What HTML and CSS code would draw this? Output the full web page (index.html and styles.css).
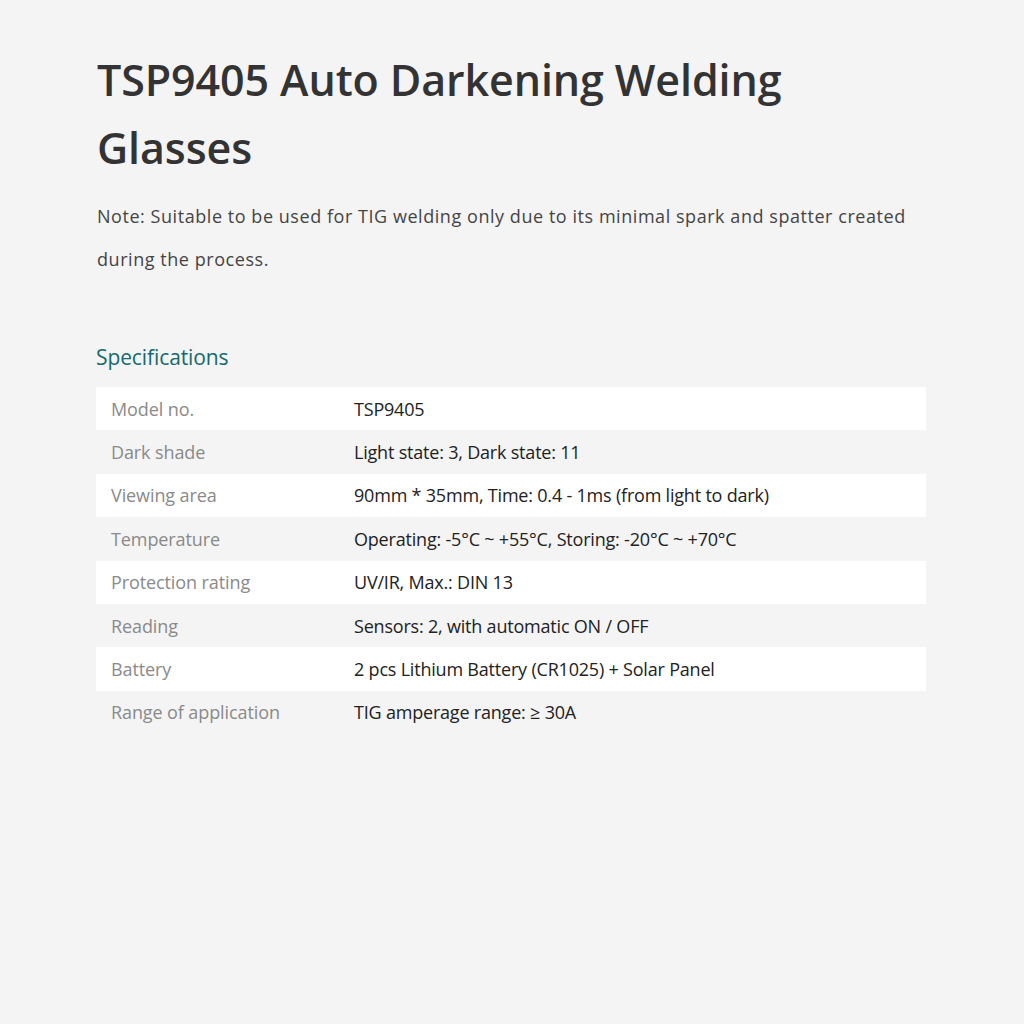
FILE: index.html
```html
<!DOCTYPE html>
<html>
<head>
<meta charset="utf-8">
<link rel="stylesheet" href="styles.css">
</head>
<body>
<main class="page">
  <h1 class="title">TSP9405 Auto Darkening Welding Glasses</h1>
  <p class="note">Note: Suitable to be used for TIG welding only due to its minimal spark and spatter created during the process.</p>
  <h2 class="spec-heading">Specifications</h2>
  <table class="spec-table">
    <tr><td class="label">Model no.</td><td class="value">TSP9405</td></tr>
    <tr><td class="label">Dark shade</td><td class="value">Light state: 3, Dark state: 11</td></tr>
    <tr><td class="label">Viewing area</td><td class="value">90mm * 35mm, Time: 0.4 - 1ms (from light to dark)</td></tr>
    <tr><td class="label">Temperature</td><td class="value">Operating: -5°C ~ +55°C, Storing: -20°C ~ +70°C</td></tr>
    <tr><td class="label">Protection rating</td><td class="value">UV/IR, Max.: DIN 13</td></tr>
    <tr><td class="label">Reading</td><td class="value">Sensors: 2, with automatic ON / OFF</td></tr>
    <tr><td class="label">Battery</td><td class="value">2 pcs Lithium Battery (CR1025) + Solar Panel</td></tr>
    <tr><td class="label">Range of application</td><td class="value">TIG amperage range: ≥ 30A</td></tr>
  </table>
</main>
</body>
</html>
```
FILE: styles.css
```css
html, body {
  margin: 0;
  padding: 0;
  background: #f4f4f4;
}
body {
  font-family: "Open Sans", "Liberation Sans", sans-serif;
  color: #333;
}
.page {
  padding: 46px 98px 0 96px;
}
.title {
  margin: 0;
  font-size: 43px;
  font-weight: 600;
  line-height: 68px;
  letter-spacing: -0.1px;
  color: #333;
  max-width: 760px;
  padding-left: 1px;
}
.note {
  margin: 13px 0 0 1px;
  font-size: 18px;
  line-height: 43px;
  color: #444;
  letter-spacing: 0.55px;
}
.spec-heading {
  margin: 61px 0 0 0;
  font-size: 21px;
  font-weight: 400;
  line-height: 30px;
  color: #156a6b;
  letter-spacing: -0.1px;
}
.spec-table {
  margin-top: 15px;
  width: 830px;
  border-collapse: collapse;
  font-size: 18px;
}
.spec-table tr {
  height: 43.4px;
}
.spec-table tr:nth-child(odd) {
  background: #fff;
}
.label {
  width: 243px;
  padding: 0 0 0 15px;
  color: #8a8a8a;
  letter-spacing: -0.1px;
}
.value {
  padding: 0;
  color: #222;
  letter-spacing: -0.2px;
}
```
